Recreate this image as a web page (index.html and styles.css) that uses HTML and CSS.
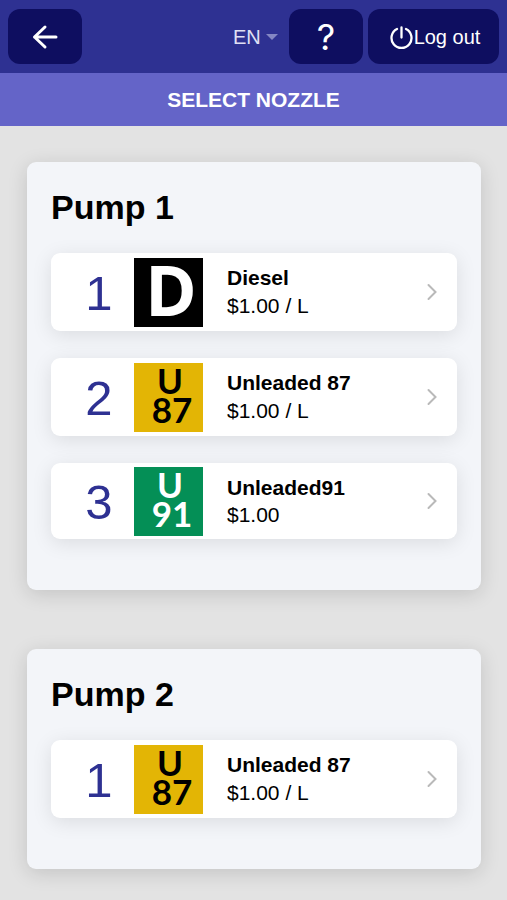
FILE: index.html
```html
<!DOCTYPE html>
<html lang="en">
<head>
<meta charset="utf-8">
<meta name="viewport" content="width=device-width, initial-scale=1">
<title>Select nozzle</title>
<link rel="stylesheet" href="styles.css">
</head>
<body>
<header class="topbar">
  <button class="bar-button" type="button" aria-label="Back">
    <svg width="26" height="26" viewBox="0 0 26 26" fill="none" stroke="currentColor" stroke-width="3" stroke-linecap="round" stroke-linejoin="round"><path d="M13 3 2.500 13 13 23M2.500 13h21.500"/></svg>
  </button>
  <div class="language">
    <select class="language-select" aria-label="Language">
      <option>EN</option>
    </select>
    <svg class="language-arrow" width="12" height="6" viewBox="0 0 12 6" fill="currentColor"><path d="M0 0h12L6 6z"/></svg>
  </div>
  <button class="bar-button help" type="button" aria-label="Help">?</button>
  <button class="bar-button logout" type="button">
    <svg width="24" height="24" viewBox="0 0 24 24" fill="none" stroke="currentColor" stroke-width="2.300" stroke-linecap="round"><path d="M12.500 1.500v10M8 3a10 10 0 1 0 9 0"/></svg>
    <span>Log out</span>
  </button>
</header>
<h1 class="page-title">SELECT NOZZLE</h1>
<main class="pumps">
  <section class="pump">
    <h2 class="pump-title">Pump 1</h2>
    <ul class="nozzles">
      <li>
        <button class="nozzle" type="button">
          <span class="number">1</span>
          <svg class="grade diesel" viewBox="0 0 69 69"><text class="grade-big" x="37" y="58">D</text></svg>
          <span class="info"><span class="name">Diesel</span><span class="price">$1.00 / L</span></span>
          <svg class="chevron" width="10" height="18" viewBox="0 0 10 18"><path d="M1.500 2 8.500 9l-7 7"/></svg>
        </button>
      </li>
      <li>
        <button class="nozzle" type="button">
          <span class="number">2</span>
          <svg class="grade regular" viewBox="0 0 69 69"><text class="grade-code" x="36" y="31">U</text><text class="grade-code" x="38" y="60">87</text></svg>
          <span class="info"><span class="name">Unleaded 87</span><span class="price">$1.00 / L</span></span>
          <svg class="chevron" width="10" height="18" viewBox="0 0 10 18"><path d="M1.500 2 8.500 9l-7 7"/></svg>
        </button>
      </li>
      <li>
        <button class="nozzle" type="button">
          <span class="number">3</span>
          <svg class="grade premium" viewBox="0 0 69 69"><text class="grade-code" x="36" y="31">U</text><text class="grade-code" x="38" y="60">91</text></svg>
          <span class="info"><span class="name">Unleaded91</span><span class="price no-unit">$1.00</span></span>
          <svg class="chevron" width="10" height="18" viewBox="0 0 10 18"><path d="M1.500 2 8.500 9l-7 7"/></svg>
        </button>
      </li>
    </ul>
  </section>
  <section class="pump">
    <h2 class="pump-title">Pump 2</h2>
    <ul class="nozzles">
      <li>
        <button class="nozzle" type="button">
          <span class="number">1</span>
          <svg class="grade regular" viewBox="0 0 69 69"><text class="grade-code" x="36" y="31">U</text><text class="grade-code" x="38" y="60">87</text></svg>
          <span class="info"><span class="name">Unleaded 87</span><span class="price">$1.00 / L</span></span>
          <svg class="chevron" width="10" height="18" viewBox="0 0 10 18"><path d="M1.500 2 8.500 9l-7 7"/></svg>
        </button>
      </li>
    </ul>
  </section>
</main>
</body>
</html>
```
FILE: styles.css
```css
* {
  box-sizing: border-box;
}

body {
  margin: 0;
  background: #e3e3e3;
  color: #000;
  font-family: "Liberation Sans", Arial, sans-serif;
}

button,
select {
  border: 0;
  font-family: inherit;
  cursor: pointer;
}

.topbar {
  display: flex;
  align-items: center;
  gap: 5px;
  padding: 9px 8px;
  background: #2e3192;
}

.bar-button {
  display: flex;
  align-items: center;
  justify-content: center;
  gap: 2px;
  width: 74px;
  height: 55px;
  padding: 0;
  border-radius: 12px;
  background: #0e0e60;
  color: #fff;
  font-size: 20px;
}

.help {
  font-family: Inter, sans-serif;
  font-size: 36px;
  font-weight: 400;
}

.logout {
  gap: 1px;
  width: 131px;
  padding: 2px 0 0 2px;
}

.language {
  display: flex;
  align-items: center;
  margin-left: auto;
  margin-right: 6px;
  color: #8487c4;
}

.language-select {
  width: 45px;
  padding: 0;
  margin-right: -12px;
  background: transparent;
  color: #e0e0f4;
  font-size: 20px;
  line-height: 24px;
  appearance: none;
}

.language-arrow {
  pointer-events: none;
}

.page-title {
  margin: 0;
  padding: 13px 8px;
  background: #6464c8;
  color: #fff;
  font-size: 21px;
  line-height: 27px;
  text-align: center;
}

.pumps {
  display: grid;
  gap: 59px;
  padding: 36px 26px 30px 27px;
}

.pump {
  padding: 24px;
  border-radius: 9px;
  background: #f3f5f9;
  box-shadow: 0 4px 20px rgba(0, 0, 0, 0.14);
}

.pump-title {
  margin: 0 0 25px;
  font-size: 34px;
  line-height: 42px;
}

.nozzles {
  display: grid;
  gap: 27px;
  margin: 0;
  padding: 0 0 27px;
  list-style: none;
}

.nozzle {
  display: grid;
  grid-template-columns: 83px 69px 1fr auto;
  align-items: center;
  width: 100%;
  padding: 0 20px 0 0;
  border-radius: 9px;
  background: #fff;
  box-shadow: 0 4px 20px rgba(0, 0, 0, 0.1);
  color: #000;
  text-align: left;
}

.number {
  padding: 2px 0 0 13px;
  color: #2e3192;
  font-size: 49px;
  line-height: 58px;
  text-align: center;
}

.grade {
  width: 69px;
  height: 69px;
  font-family: Lato, sans-serif;
  font-weight: 700;
  text-anchor: middle;
}

.diesel {
  background: #000;
  fill: #fff;
}

.regular {
  background: #e3b505;
  fill: #000;
}

.premium {
  background: #048f56;
  fill: #fff;
}

.grade-big {
  font-family: "Open Sans", sans-serif;
  font-size: 70px;
}

.grade-code {
  font-size: 35px;
}

.info {
  display: grid;
  padding: 11px 0 11px 24px;
  font-size: 21px;
  line-height: 28px;
}

.name {
  font-weight: 700;
}

.no-unit {
  line-height: 26px;
}

.chevron {
  fill: none;
  stroke: #b9b9b9;
  stroke-width: 2;
  stroke-linecap: round;
}
```
